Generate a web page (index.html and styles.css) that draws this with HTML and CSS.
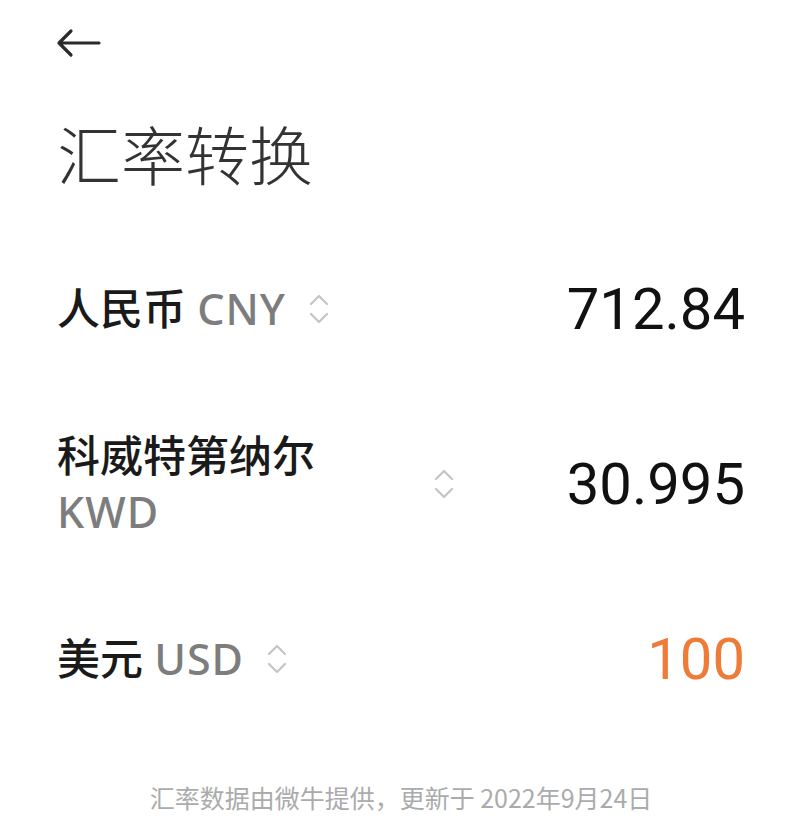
FILE: index.html
```html
<!DOCTYPE html>
<html lang="zh-CN">
<head>
    <meta charset="UTF-8">
    <title>汇率转换</title>
    <link rel="stylesheet" href="styles.css">
</head>
<body>
    <div class="converter">
        <div class="top-bar">
            <svg class="back" width="46" height="30" viewBox="0 0 46 30">
                <path d="M44 15H4M16 3L4 15L16 27" fill="none" stroke="#2b2b2b" stroke-width="3.2" stroke-linecap="round" stroke-linejoin="round"/>
            </svg>
        </div>

        <h1 class="title">汇率转换</h1>

        <div class="rate-row">
            <div class="currency">人民币 <span class="code">CNY</span></div>
            <svg class="switch" width="22" height="34" viewBox="0 0 22 34">
                <path d="M3 12L11 4L19 12M3 22L11 30L19 22" fill="none" stroke="#c4c4c4" stroke-width="2.2" stroke-linecap="round" stroke-linejoin="round"/>
            </svg>
            <div class="amount">712.84</div>
        </div>

        <div class="rate-row">
            <div class="currency">科威特第纳尔 <span class="code">KWD</span></div>
            <svg class="switch" width="22" height="34" viewBox="0 0 22 34">
                <path d="M3 12L11 4L19 12M3 22L11 30L19 22" fill="none" stroke="#c4c4c4" stroke-width="2.2" stroke-linecap="round" stroke-linejoin="round"/>
            </svg>
            <div class="amount">30.995</div>
        </div>

        <div class="rate-row">
            <div class="currency">美元 <span class="code">USD</span></div>
            <svg class="switch" width="22" height="34" viewBox="0 0 22 34">
                <path d="M3 12L11 4L19 12M3 22L11 30L19 22" fill="none" stroke="#c4c4c4" stroke-width="2.2" stroke-linecap="round" stroke-linejoin="round"/>
            </svg>
            <div class="amount active">100</div>
        </div>

        <p class="source">汇率数据由微牛提供，更新于 2022年9月24日</p>
    </div>
</body>
</html>
```

FILE: styles.css
```css
body { margin: 0; background: #ffffff; font-family: "Noto Sans", "Noto Sans CJK SC", sans-serif; color: #1a1a1a; }
.converter { padding: 0 55px 0 57px; }
.top-bar { height: 86px; display: flex; align-items: center; }
.back { display: block; margin-left: -2px; }
.title { margin: 22px 0 25px; font-family: "Noto Sans CJK SC", sans-serif; font-size: 64px; font-weight: 300; line-height: 88px; color: #333333; }
.rate-row { height: 175px; display: flex; align-items: center; }
.currency { max-width: 354px; font-size: 43px; font-weight: 500; line-height: 56px; color: #1a1a1a; }
.code { color: #7d7d7d; letter-spacing: 1px; }
.switch { flex: none; margin-left: 22px; }
.amount { margin-left: auto; font-family: Roboto, sans-serif; font-size: 58px; font-weight: 400; color: #111111; }
.amount.active { color: #ef7b38; }
.source { margin: 33px 0 0; text-align: center; font-family: "Noto Sans CJK SC", sans-serif; font-size: 25px; color: #ababab; }
```
